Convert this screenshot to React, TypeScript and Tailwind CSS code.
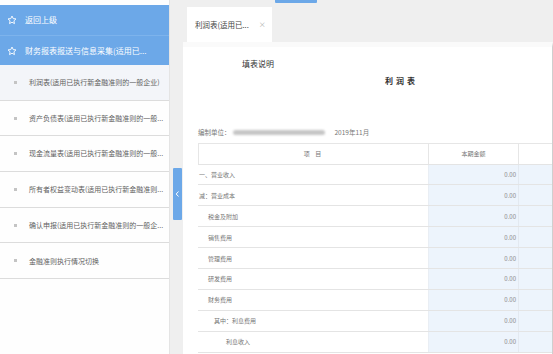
import React from "react";

const font = { fontFamily: '"Noto Sans CJK SC", "Noto Sans", sans-serif' };

function Star() {
  return (
    <svg width="10" height="10" viewBox="0 0 24 24" fill="none" stroke="white" strokeWidth="2.2" strokeLinejoin="round">
      <path d="M12 2.5l2.9 6.1 6.6.8-4.9 4.6 1.3 6.6L12 17.3l-5.9 3.3 1.3-6.6-4.9-4.6 6.6-.8z" />
    </svg>
  );
}

const navItems = [
  "利润表(适用已执行新金融准则的一般企业)",
  "资产负债表(适用已执行新金融准则的一般...",
  "现金流量表(适用已执行新金融准则的一般...",
  "所有者权益变动表(适用已执行新金融准则...",
  "确认申报(适用已执行新金融准则的一般企...",
  "金融准则执行情况切换",
];

const rows: { label: string; indent: string }[] = [
  { label: "一、营业收入", indent: "pl-[1px]" },
  { label: "减：营业成本", indent: "pl-[1px]" },
  { label: "税金及附加", indent: "pl-[10px]" },
  { label: "销售费用", indent: "pl-[10px]" },
  { label: "管理费用", indent: "pl-[10px]" },
  { label: "研发费用", indent: "pl-[10px]" },
  { label: "财务费用", indent: "pl-[10px]" },
  { label: "其中：利息费用", indent: "pl-[16px]" },
  { label: "利息收入", indent: "pl-[28px]" },
];

export default function App() {
  return (
    <div className="w-[553px] h-[354px] flex overflow-hidden bg-[#efefef]" style={font}>
      {/* Sidebar */}
      <div className="w-[170px] h-full flex flex-col bg-[#fefefe] border-r border-[#e4e4e4] pt-[5px]">
        <div className="bg-[#6ca8e8] flex flex-col">
          <div className="h-[31px] flex items-center gap-[8px] pl-[7px] border-b border-[#7db3ec]">
            <Star />
            <span className="text-[8px] text-white">返回上级</span>
          </div>
          <div className="h-[29px] flex items-center gap-[8px] pl-[7px]">
            <Star />
            <span className="text-[8px] text-white whitespace-nowrap">财务报表报送与信息采集(适用已...</span>
          </div>
        </div>
        {navItems.map((t, i) => (
          <div
            key={i}
            className={`h-[35.7px] flex items-center border-b border-[#dcdcdc] pl-[14px] gap-[12px] ${i === 0 ? "bg-[#f3f5f9]" : "bg-[#fefefe]"}`}
          >
            <span className="w-[3px] h-[3px] bg-[#c4c4c4] shrink-0" />
            <span className="text-[7px] text-[#5f5f5f] whitespace-nowrap">{t}</span>
          </div>
        ))}
      </div>

      {/* Gutter with toggle */}
      <div className="w-[13px] h-full bg-[#efefef] pt-[168px] pl-[3px]">
        <div className="w-[9px] h-[52px] bg-[#6ca8e8] rounded-[1px] flex items-center justify-center">
          <svg width="5" height="6" viewBox="0 0 5 6" fill="none" stroke="white" strokeWidth="1">
            <path d="M3.5 0.5L1.2 3l2.3 2.5" />
          </svg>
        </div>
      </div>

      {/* Main */}
      <div className="flex-1 h-full flex flex-col min-w-0">
        <div className="h-[42px] shrink-0 flex items-start">
          <div className="ml-[4px] mt-[7px] w-[85px] h-[35px] bg-white flex items-center pl-[8px] gap-[10px]">
            <span className="text-[7.5px] text-[#444] whitespace-nowrap">利润表(适用已...</span>
            <span className="text-[7px] text-[#aaa]">×</span>
          </div>
          <div className="ml-[3px] w-[42px] h-[3px] bg-[#6ca8e8] rounded-b-[1px]" />
        </div>
        <div className="flex-1 bg-white border-r border-[#cfcfcf] border-t-[5px] border-t-[#fafafa] flex flex-col overflow-hidden">
          <div className="pl-[59px] pt-[13px] text-[8px] text-[#333] leading-none">填表说明</div>
          <div className="pl-[202px] pt-[9px] text-[8px] text-[#333] leading-none tracking-[3px] font-semibold">利润表</div>
          <div className="pl-[15px] pt-[44px] flex items-center text-[6.5px] text-[#777] leading-none">
            <span>编制单位：</span>
            <span className="ml-[2px] w-[92px] h-[5px] bg-[#c6c6c6] rounded-full blur-[1px]" />
            <span className="ml-[10px]">2019年11月</span>
          </div>
          <div className="ml-[15px] mt-[7px] flex flex-col w-[420px] border-t border-[#e6e6e6]">
            <div className="h-[21px] flex border-b border-[#e4e4e4]">
              <div className="w-[230px] border-l border-[#e6e6e6] flex items-center justify-center text-[6px] text-[#777] tracking-[2px]">项 目</div>
              <div className="w-[90px] border-l border-[#e6e6e6] flex items-center justify-center text-[6px] text-[#777]">本期金额</div>
              <div className="flex-1 border-l border-[#e6e6e6]" />
            </div>
            {rows.map((r, i) => (
              <div key={i} className="h-[20.9px] flex border-b border-[#e4e4e4]">
                <div className={`w-[230px] flex items-center text-[6px] text-[#777] ${r.indent}`}>{r.label}</div>
                <div className="w-[90px] bg-[#edf4fc] border-l border-[#e9eef4] flex items-center justify-end pr-[2px] text-[6px] text-[#888]">0.00</div>
                <div className="flex-1 bg-[#edf4fc] border-l border-[#e3e9f0]" />
              </div>
            ))}
          </div>
        </div>
      </div>
    </div>
  );
}
